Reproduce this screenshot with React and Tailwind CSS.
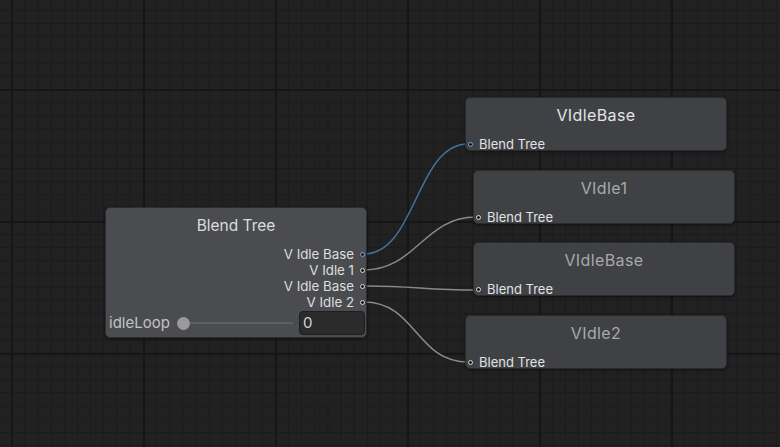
import React from 'react';

const font = { fontFamily: 'Inter, "Noto Sans", sans-serif' };

function Port({ blue }) {
  return (
    <span
      className={`block w-[5px] h-[5px] rounded-full border bg-[#1b1b1b] shrink-0 ${
        blue ? 'border-[#7aa6d6]' : 'border-[#d8d8d8]'
      }`}
    />
  );
}

function StateNode({ left, top, title, bright, blue }) {
  return (
    <div
      className="absolute w-[262px] h-[54px] flex flex-col rounded-[5px] bg-[#3f4145] border border-[#2a2b2d] shadow-[0_1px_3px_rgba(0,0,0,0.5)]"
      style={{ left, top }}
    >
      <div
        className={`mt-[6px] h-[22px] leading-[22px] text-center text-[16px] tracking-[0.4px] ${
          bright ? 'text-[#e4e4e4]' : 'text-[#a9a9a9]'
        }`}
      >
        {title}
      </div>
      <div className="mt-auto h-[12px] flex items-center gap-[6px] pl-[2px]">
        <Port blue={blue} />
        <span className="text-[13px] leading-[12px] text-[#e2e2e2]">Blend Tree</span>
      </div>
    </div>
  );
}

const outputs = ['V Idle Base', 'V Idle 1', 'V Idle Base', 'V Idle 2'];

function BlendTreeNode() {
  return (
    <div className="absolute left-[105px] top-[207px] w-[262px] h-[131px] flex flex-col rounded-[5px] bg-[#4a4c50] border border-[#2c2d30] shadow-[0_1px_3px_rgba(0,0,0,0.5)]">
      <div className="mt-[7px] h-[22px] leading-[22px] text-center text-[15.5px] text-[#dcdcdc]">
        Blend Tree
      </div>
      <div className="mt-[9px] flex flex-col">
        {outputs.map((o, i) => (
          <div key={i} className="h-[16px] flex items-center justify-end gap-[6px] pr-[1px]">
            <span className="text-[13.3px] leading-[16px] text-[#dedede]">{o}</span>
            <Port blue={i === 0} />
          </div>
        ))}
      </div>
      <div className="mt-[1px] h-[24px] flex items-center pl-[3px] pr-[1px]">
        <span className="text-[15px] text-[#c2c2c2] w-[68px]">idleLoop</span>
        <span className="w-[13px] h-[13px] rounded-full bg-[#9a9a9a] shrink-0" />
        <span className="h-[2px] w-[103px] bg-[#5f6063]" />
        <div className="ml-auto w-[66px] h-[24px] rounded-[4px] bg-[#2b2b2b] border border-[#1e1e1e] flex items-center pl-[3px] text-[15px] text-[#d4d4d4]">
          0
        </div>
      </div>
    </div>
  );
}

function curve(x1, y1, x2, y2, dx = 52) {
  return `M${x1} ${y1} C${x1 + dx} ${y1} ${x2 - dx} ${y2} ${x2} ${y2}`;
}

export default function App() {
  return (
    <div
      className="relative w-[780px] h-[447px] overflow-hidden bg-[#212121] bg-[linear-gradient(to_right,#161616_2px,transparent_2px),linear-gradient(to_bottom,#161616_2px,transparent_2px),linear-gradient(to_right,#1b1b1b_1px,transparent_1px),linear-gradient(to_bottom,#1b1b1b_1px,transparent_1px)] [background-size:132px_132px,132px_132px,13.2px_13.2px,13.2px_13.2px] [background-position:11px_89px,11px_89px,11px_9.8px,11px_9.8px]"
      style={font}
    >
      <svg className="absolute inset-0" width="780" height="447">
        <path d={curve(364, 254, 468, 144)} stroke="#46709e" strokeWidth="1.5" fill="none" />
        <path d={curve(364, 270, 476, 217)} stroke="#8a8a8a" strokeWidth="1.5" fill="none" />
        <path d={curve(364, 286, 476, 290)} stroke="#8a8a8a" strokeWidth="1.5" fill="none" />
        <path d={curve(364, 302, 468, 362)} stroke="#8a8a8a" strokeWidth="1.5" fill="none" />
      </svg>
      <BlendTreeNode />
      <StateNode left={465} top={97} title="VIdleBase" bright blue />
      <StateNode left={473} top={170} title="VIdle1" />
      <StateNode left={473} top={242} title="VIdleBase" />
      <StateNode left={465} top={315} title="VIdle2" />
    </div>
  );
}
